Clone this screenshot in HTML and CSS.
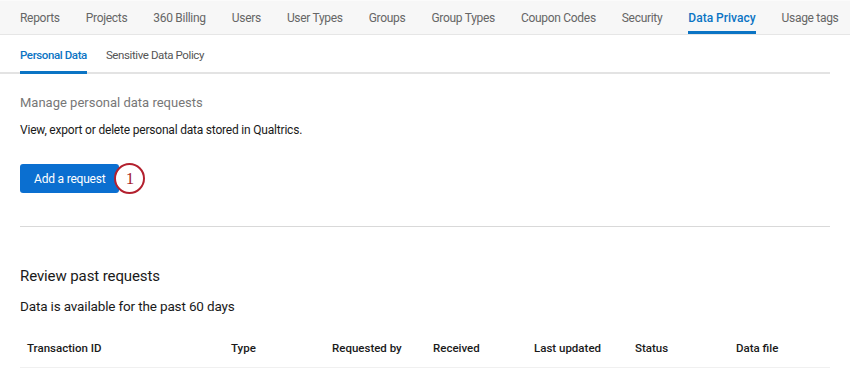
FILE: index.html
```html
<!DOCTYPE html>
<html lang="en">
<head>
  <meta charset="UTF-8" />
  <title>Data Privacy</title>
  <link rel="stylesheet" href="styles.css">
</head>
<body>
  <div class="topnav">
    <a href="#">Reports</a>
    <a href="#">Projects</a>
    <a href="#">360 Billing</a>
    <a href="#">Users</a>
    <a href="#">User Types</a>
    <a href="#">Groups</a>
    <a href="#">Group Types</a>
    <a href="#">Coupon Codes</a>
    <a href="#">Security</a>
    <a href="#" class="active">Data Privacy</a>
    <a href="#">Usage tags</a>
  </div>

  <div class="subnav">
    <a href="#" class="active">Personal Data</a>
    <a href="#">Sensitive Data Policy</a>
  </div>

  <div class="content">
    <section class="manage">
      <h2 class="manage-title">Manage personal data requests</h2>
      <p class="manage-text">View, export or delete personal data stored in Qualtrics.</p>
      <div class="button-row">
        <button class="btn-primary">Add a request</button>
        <span class="callout">1</span>
      </div>
    </section>

    <section class="review">
      <h2 class="review-title">Review past requests</h2>
      <p class="review-text">Data is available for the past 60 days</p>
      <table class="requests">
        <thead>
          <tr>
            <th class="col-id">Transaction ID</th>
            <th>Type</th>
            <th>Requested by</th>
            <th>Received</th>
            <th>Last updated</th>
            <th>Status</th>
            <th>Data file</th>
          </tr>
        </thead>
      </table>
    </section>
  </div>
</body>
</html>
```

FILE: styles.css
```css
body {
  margin: 0;
  padding: 0;
  background-color: #fff;
  font-family: Roboto, 'Liberation Sans', sans-serif;
  color: #1a1a1a;
}

.topnav {
  display: flex;
  gap: 26px;
  height: 35px;
  padding: 0 20px;
  background-color: #f7f7f7;
  border-top: 1px solid #fbfbfb;
  border-bottom: 1px solid #e6e6e6;
  box-sizing: border-box;
  white-space: nowrap;
  overflow: hidden;
}

.topnav a {
  display: flex;
  align-items: center;
  font-size: 12px;
  letter-spacing: -0.3px;
  color: #666;
  text-decoration: none;
  border-bottom: 3px solid transparent;
  padding-top: 3px;
}

.topnav a.active {
  color: #0b74c4;
  font-weight: 500;
  letter-spacing: 0;
  border-bottom-color: #0b74c4;
}

.subnav {
  display: flex;
  gap: 19px;
  height: 39px;
  margin-right: 20px;
  padding: 0 20px;
  border-bottom: 2px solid #e3e3e3;
  box-sizing: border-box;
}

.subnav a {
  display: flex;
  align-items: center;
  font-size: 11.5px;
  letter-spacing: -0.4px;
  color: #555;
  text-decoration: none;
  border-bottom: 3px solid transparent;
  margin-bottom: -2px;
  padding-top: 3px;
}

.subnav a.active {
  color: #0b74c4;
  font-weight: 500;
  border-bottom-color: #0b74c4;
}

.content {
  padding: 0 20px;
}

.manage {
  padding: 21px 0 32px;
  border-bottom: 1px solid #d9d9d9;
}

.manage-title {
  margin: 0;
  font-size: 13px;
  font-weight: normal;
  color: #777;
}

.manage-text {
  margin: 13px 0 0;
  font-size: 12px;
  letter-spacing: -0.2px;
  color: #1a1a1a;
}

.button-row {
  display: flex;
  align-items: center;
  margin-top: 26px;
}

.btn-primary {
  height: 29px;
  padding: 0 14px;
  border: none;
  border-radius: 3px;
  background-color: #0b6fd0;
  color: #fff;
  font-family: Roboto, 'Liberation Sans', sans-serif;
  font-size: 12px;
  letter-spacing: -0.2px;
  cursor: pointer;
}

.callout {
  display: flex;
  align-items: center;
  justify-content: center;
  width: 27px;
  height: 27px;
  margin-left: -5px;
  border: 2px solid #b3202e;
  border-radius: 50%;
  background-color: #fff;
  color: #a61c2a;
  font-family: 'Liberation Serif', serif;
  font-size: 17px;
}

.review {
  padding-top: 40px;
}

.review-title {
  margin: 0;
  font-size: 15px;
  letter-spacing: -0.1px;
  font-weight: normal;
}

.review-text {
  margin: 13px 0 0;
  font-size: 13.5px;
  letter-spacing: -0.15px;
}

.requests {
  width: 100%;
  margin-top: 19px;
  border-collapse: collapse;
  table-layout: fixed;
}

.requests th {
  box-sizing: border-box;
  width: 101px;
  padding: 8px 7px 12px;
  text-align: left;
  font-size: 11.5px;
  font-weight: 500;
  color: #1a1a1a;
  border-bottom: 1px solid #f0f0f0;
}

.requests th.col-id {
  width: 204px;
}
```
